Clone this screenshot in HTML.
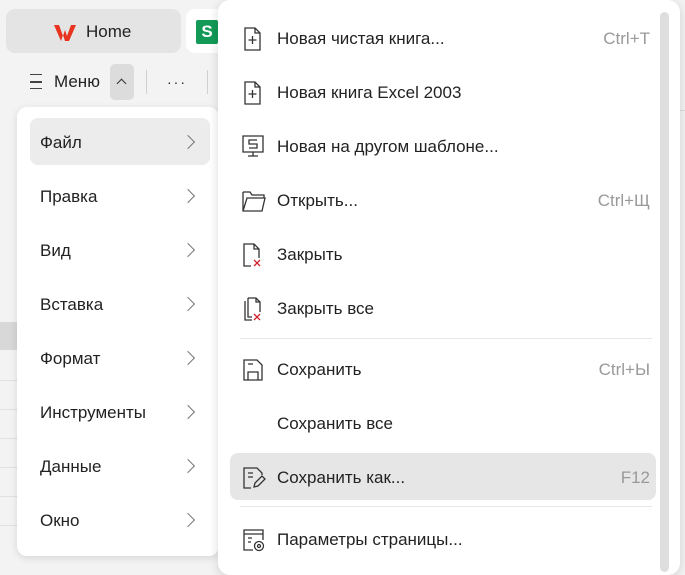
<!DOCTYPE html>
<html><head><meta charset="utf-8"><style>
*{margin:0;padding:0;box-sizing:border-box}
body{width:685px;height:565px;overflow:hidden;background:#f3f3f3;font-family:"Liberation Sans","DejaVu Sans",sans-serif;position:relative;color:#222}
.abs{position:absolute}
.tab{left:6px;top:9px;width:175px;height:44px;background:#e4e4e4;border-radius:9px}
.tab2{left:186px;top:9px;width:40px;height:44px;background:#fff;border-radius:9px}
.lm{left:17px;top:107px;width:202px;height:449px;background:#fff;border-radius:10px;box-shadow:0 2px 8px rgba(0,0,0,.12)}
.li{position:absolute;left:13px;width:180px;height:47px;font-size:17px;line-height:49px;padding-left:10px;border-radius:8px}
.li .ch{position:absolute;right:17px;top:19px;width:10px;height:10px;border-right:1.2px solid #777;border-top:1.2px solid #777;transform:rotate(45deg)}
.rm{left:218px;top:0;width:462px;height:575px;background:#fff;border-radius:12px;box-shadow:0 2px 10px rgba(0,0,0,.15)}
.ri{position:absolute;left:12px;width:426px;height:47px;font-size:17px;line-height:49px;border-radius:8px}
.ri .t{position:absolute;left:47px}
.ri .s{position:absolute;right:6px;color:#999}
.ri svg{position:absolute;left:12px;top:13px}
.sep{position:absolute;left:22px;width:412px;height:1px;background:#e6e6e6}
.grid{left:0;background:#e0e0e0;height:1px;width:20px}
</style></head><body>
<div class="abs tab"></div>
<svg class="abs" style="left:53px;top:23px" width="24" height="20" viewBox="0 0 24 20"><path d="M1 2h5l4 11 2-6 2 6 4-11h5l-7 16h-4l-2-6-2 6H8z" fill="#e8331e"/></svg>
<div class="abs" style="left:86px;top:22px;font-size:17px">Home</div>
<div class="abs tab2"></div>
<div class="abs" style="left:196px;top:20px;width:22px;height:24px;background:#139a57;color:#fff;font-weight:bold;font-size:17px;text-align:center;line-height:24px;border-radius:2px">S</div>
<div class="abs" style="left:30px;top:74px;width:12px;height:15px;border-top:1.5px solid #444;border-bottom:1.5px solid #444"></div>
<div class="abs" style="left:30px;top:81px;width:12px;height:1.5px;background:#444"></div>
<div class="abs" style="left:54px;top:72px;font-size:17px">Меню</div>
<div class="abs" style="left:110px;top:64px;width:24px;height:36px;background:#dcdcdc;border-radius:5px"></div>
<div class="abs" style="left:118px;top:80px;width:7px;height:7px;border-left:1.5px solid #333;border-top:1.5px solid #333;transform:rotate(45deg)"></div>
<div class="abs" style="left:146px;top:70px;width:1px;height:24px;background:#d0d0d0"></div>
<div class="abs" style="left:167px;top:74px;font-size:14px;letter-spacing:2px">···</div>
<div class="abs" style="left:207px;top:70px;width:1px;height:24px;background:#d0d0d0"></div>
<div class="abs" style="left:0;top:322px;width:20px;height:28px;background:#d8d8d8"></div>
<div class="abs grid" style="top:380px"></div><div class="abs grid" style="top:409px"></div><div class="abs grid" style="top:438px"></div><div class="abs grid" style="top:467px"></div><div class="abs grid" style="top:496px"></div><div class="abs grid" style="top:525px"></div>
<div class="abs" style="left:680px;top:110px;width:5px;height:1px;background:#ddd"></div>
<div class="abs lm">
<div class="li" style="top:11px;background:#ececec">Файл<span class="ch"></span></div>
<div class="li" style="top:65px">Правка<span class="ch"></span></div>
<div class="li" style="top:119px">Вид<span class="ch"></span></div>
<div class="li" style="top:173px">Вставка<span class="ch"></span></div>
<div class="li" style="top:227px">Формат<span class="ch"></span></div>
<div class="li" style="top:281px">Инструменты<span class="ch"></span></div>
<div class="li" style="top:335px">Данные<span class="ch"></span></div>
<div class="li" style="top:389px">Окно<span class="ch"></span></div>
</div>
<div class="abs rm">
<div class="abs" style="left:442px;top:12px;width:9px;height:560px;background:#dedede;border-radius:5px"></div>
<div class="ri" style="top:14px"><svg width="22" height="24" viewBox="0 0 22 24" fill="none" stroke="#333" stroke-width="1.3"><path d="M3 1h10l5 5v17H3z M13 1v5h5 M6.5 13h8 M10.5 9v8"/></svg><span class="t">Новая чистая книга...</span><span class="s">Ctrl+T</span></div>
<div class="ri" style="top:68px"><svg width="22" height="24" viewBox="0 0 22 24" fill="none" stroke="#333" stroke-width="1.3"><path d="M3 1h10l5 5v17H3z M13 1v5h5 M6.5 13h8 M10.5 9v8"/></svg><span class="t">Новая книга Excel 2003</span></div>
<div class="ri" style="top:122px"><svg width="22" height="24" viewBox="0 0 22 24" fill="none" stroke="#333" stroke-width="1.3"><path d="M1 1h20v16H1z M11 17v4 M6 21h10 M15 5H7v4h8v4H7"/></svg><span class="t">Новая на другом шаблоне...</span></div>
<div class="ri" style="top:176px"><svg width="24" height="24" viewBox="0 0 24 24" fill="none" stroke="#333" stroke-width="1.3"><path d="M1 3h7l2 3h12v3 M1 3v19h19l3-13H5L1 22"/></svg><span class="t">Открыть...</span><span class="s">Ctrl+Щ</span></div>
<div class="ri" style="top:230px"><svg width="22" height="24" viewBox="0 0 22 24" fill="none" stroke="#333" stroke-width="1.3"><path d="M9 23H2V1h10l5 5v9 M12 1v5h5"/><path d="M12 17l6 6M18 17l-6 6" stroke="#d0202e"/></svg><span class="t">Закрыть</span></div>
<div class="ri" style="top:284px"><svg width="22" height="24" viewBox="0 0 22 24" fill="none" stroke="#333" stroke-width="1.3"><path d="M3 4v19h7 M6 1h8l4 4v10 M6 1v19h4 M14 1v4h4"/><path d="M12 17l6 6M18 17l-6 6" stroke="#d0202e"/></svg><span class="t">Закрыть все</span></div>
<div class="sep" style="top:338px"></div>
<div class="ri" style="top:345px"><svg width="22" height="24" viewBox="0 0 22 24" fill="none" stroke="#333" stroke-width="1.3"><path d="M2 2h13l5 5v15H2z M6 22v-8h10v8 M6 6h5"/></svg><span class="t">Сохранить</span><span class="s">Ctrl+Ы</span></div>
<div class="ri" style="top:399px"><span class="t">Сохранить все</span></div>
<div class="ri" style="top:453px;background:#e6e6e6"><svg width="24" height="24" viewBox="0 0 24 24" fill="none" stroke="#333" stroke-width="1.3"><path d="M9 22H2V2h13l5 5v2 M6 7h5 M6 11h5 M12 21l1-4 7-7 3 3-7 7z"/></svg><span class="t">Сохранить как...</span><span class="s">F12</span></div>
<div class="sep" style="top:506px"></div>
<div class="ri" style="top:515px"><svg width="24" height="24" viewBox="0 0 24 24" fill="none" stroke="#333" stroke-width="1.3"><path d="M11 22H2V2h19v10 M2 6h19 M6 10h4 M6 14h3"/><circle cx="17" cy="18" r="4.5"/><circle cx="17" cy="18" r="1.5"/></svg><span class="t">Параметры страницы...</span></div>
</div>
</body></html>
